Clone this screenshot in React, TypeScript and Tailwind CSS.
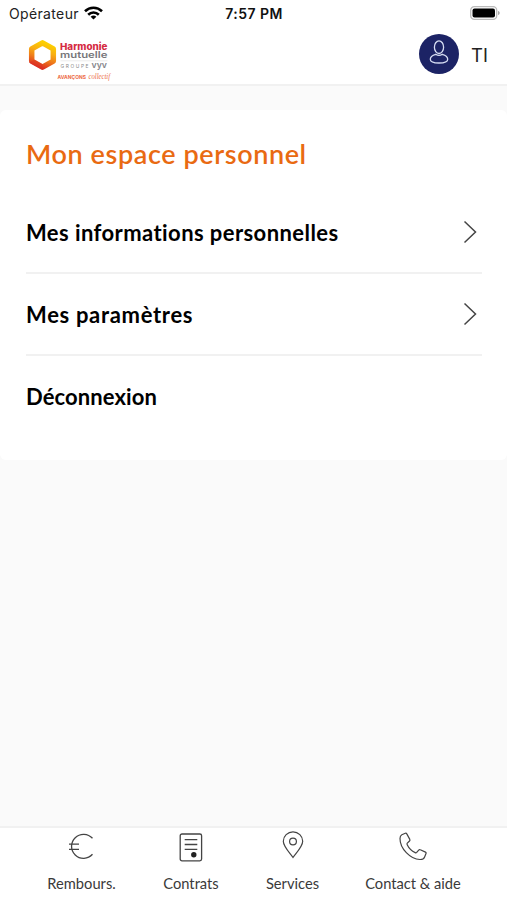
import type { ReactNode } from 'react'

const menu = [
  { label: 'Mes informations personnelles', arrow: true, spacing: 'tracking-[0.420px]' },
  { label: 'Mes paramètres', arrow: true, spacing: 'tracking-[0.680px]' },
  { label: 'Déconnexion', arrow: false, spacing: 'mb-[2px] tracking-[0.100px]' },
]

function StatusBar() {
  return (
    <div className="grid h-7 grid-cols-3 items-center pl-[9px] pr-[7px] font-['Inter'] text-[14px] text-black">
      <div className="flex items-center gap-[5px] pb-[2px]">
        <span className="tracking-[0.350px] text-[#222]">Opérateur</span>
        <svg className="h-[14px] w-[19px]" viewBox="0 0 19 14" fill="none" stroke="#000" strokeWidth="2.6">
          <path d="M1 5.200a12.200 12.200 0 0 1 17 0" />
          <path d="M4.200 8.700a7.600 7.600 0 0 1 10.600 0" />
          <path d="M9.500 13.600 6.600 10.800a4.200 4.200 0 0 1 5.800 0z" fill="#000" stroke="none" />
        </svg>
      </div>
      <span className="pb-[2px] pr-[1px] text-center text-[14px] font-semibold tracking-[0.450px] text-[#111]">7:57 PM</span>
      <svg className="mb-[2px] h-[14px] w-[30px] justify-self-end" viewBox="0 0 30 14">
        <rect x="0.700" y="0.700" width="26" height="12.600" rx="3.600" fill="#fff" stroke="#bbb" strokeWidth="1.300" />
        <rect x="2.500" y="2.400" width="22.500" height="9.200" rx="2" fill="#000" />
        <path d="M28 5v4c1.100-.3 1.700-1 1.700-2S29.100 5.300 28 5z" fill="#aaa" />
      </svg>
    </div>
  )
}

function Logo() {
  return (
    <svg className="h-[46px] w-[86px]" viewBox="0 0 86 46" fontFamily="Inter, sans-serif">
      <defs>
        <linearGradient id="hexagon" x1="0.650" y1="0" x2="0.350" y2="1">
          <stop offset="0" stopColor="#fdd000" />
          <stop offset="0.350" stopColor="#f8ae12" />
          <stop offset="0.650" stopColor="#ef7d1a" />
          <stop offset="1" stopColor="#dc3023" />
        </linearGradient>
      </defs>
      <path d="M14.500 3.800 25.300 9.900v12.200L14.500 28.200 3.700 22.100V9.900z" fill="none" stroke="url(#hexagon)" strokeWidth="5.500" strokeLinejoin="round" />
      <path d="M3.700 22.100 1 23.500 14.500 31v-5.800L6.400 20.600z" fill="#dc3023" fillOpacity=".45" />
      <text x="32" y="10.600" fontSize="9.500" fontWeight="800" fill="#d52b43" textLength="47.500" lengthAdjust="spacingAndGlyphs">Harmonie</text>
      <text x="32" y="18.800" fontSize="9" fontWeight="600" fill="#77777b" textLength="47.500" lengthAdjust="spacingAndGlyphs">mutuelle</text>
      <path d="M32.500 21.800h47" stroke="#ddd" strokeWidth=".6" />
      <text x="32.500" y="28.500" fontSize="4.800" fill="#888" textLength="28" lengthAdjust="spacing">GROUPE</text>
      <text x="63.500" y="28.500" fontSize="9" fontWeight="600" fill="#85858a" textLength="15.500" lengthAdjust="spacingAndGlyphs">vyv</text>
      <text x="29.500" y="40" fontSize="5" fontWeight="700" fill="#ed6a45" textLength="28.500" lengthAdjust="spacingAndGlyphs">AVANÇONS</text>
      <text x="60.500" y="40" fontSize="8" fontStyle="italic" fill="#ed6a45" fontFamily="Liberation Serif, serif" textLength="21.500" lengthAdjust="spacingAndGlyphs">collectif</text>
    </svg>
  )
}

function Header() {
  return (
    <header className="flex h-[58px] items-start justify-between border-b-2 border-[#f1f1f1] pl-7 pr-5">
      <div className="pt-[11px]"><Logo /></div>
      <div className="flex items-center gap-3 pt-[6px]">
        <div className="flex h-10 w-10 items-center justify-center rounded-full bg-[#1c2365]">
          <svg className="mb-[4px] h-[24px] w-[20px]" viewBox="0 0 20 24" fill="none" stroke="#d5dcf2" strokeWidth="1.300">
            <ellipse cx="10" cy="7.200" rx="4.600" ry="6.300" />
            <path d="M6.700 14.300C3.500 15.200 1.300 17 1.300 19.200c0 2.300 3.900 3.800 8.700 3.800s8.700-1.500 8.700-3.800c0-2.200-2.200-4-5.400-4.900-2 1.400-4.600 1.400-6.600 0z" />
          </svg>
        </div>
        <span className="mt-[2px] w-4 font-['Inter'] text-[18.500px] leading-6 text-[#222]">TI</span>
      </div>
    </header>
  )
}

function Tab({ label, className, children }: { label: string; className: string; children: ReactNode }) {
  return (
    <button type="button" className={`flex flex-col items-center ${className}`}>
      <span className="flex h-[43px] items-start pt-1">{children}</span>
      <span className="whitespace-nowrap font-['Lato'] text-[14.700px] leading-6 text-[#3a3a3a]">{label}</span>
    </button>
  )
}

function TabBar() {
  return (
    <nav className="flex h-[74px] border-t-2 border-[#f1f1f1] bg-white pl-[47px]">
      <Tab label="Rembours." className="w-[69px]">
        <svg className="mt-[1px] mr-[2px] h-[27px] w-[26px]" viewBox="0 0 26 27" fill="none" stroke="#444" strokeWidth="1.300">
          <path d="M24.500 5.300A12 12 0 1 0 24.500 21.300M1 11.200h10M1 16.300h10" />
        </svg>
      </Tab>
      <Tab label="Contrats" className="ml-[46px] w-[58px]">
        <svg className="h-[30px] w-[24px]" viewBox="0 0 24 30" fill="none" stroke="#444" strokeWidth="1.300">
          <rect x="1.200" y="2" width="21.400" height="26.800" rx="1.800" />
          <path d="M5.700 7.700h12.600M5.700 12.500h12.600M5.700 17.300h12.600" />
          <circle cx="14.800" cy="22.800" r="2.700" fill="#222" stroke="none" />
        </svg>
      </Tab>
      <Tab label="Services" className="ml-[45px] w-[55px]">
        <svg className="mt-[-1px] h-[28px] w-[22px]" viewBox="0 0 22 28" fill="none" stroke="#444" strokeWidth="1.200">
          <path d="M11 26.500C8.500 22.700 1.300 15.700 1.300 10.300a9.700 9.400 0 0 1 19.400 0C20.700 15.700 13.500 22.700 11 26.500z" />
          <circle cx="11" cy="10.500" r="3.400" />
        </svg>
      </Tab>
      <Tab label="Contact & aide" className="ml-[45px] w-[96px]">
        <svg className="h-[29px] w-[28px]" viewBox="0 0 28 29" fill="none" stroke="#444" strokeWidth="1.200" strokeLinejoin="round">
          <path d="M2.800 2.800 6.300 1.300c.7-.3 1.200 0 1.500.6l3 5.500c.3.600.2 1.100-.3 1.600L8.300 11.200c-.4.400-.4.900-.1 1.500 1.700 3.500 4.600 6.300 8 7.900.6.300 1.100.2 1.500-.2l2-2.300c.5-.5 1-.6 1.600-.3l5.200 2.300c.6.300.8.900.5 1.500l-1.500 3.600c-.7 1.600-2.600 2.400-4.600 2.300C11.300 27.200.9 16.500 1 6.500c0-1.700.5-3 1.800-3.700z" />
        </svg>
      </Tab>
    </nav>
  )
}

export default function App() {
  return (
    <div className="flex h-[900px] w-[507px] flex-col overflow-hidden bg-white">
      <StatusBar />
      <Header />
      <main className="flex-1 bg-[#fafafa] pt-6">
        <section className="h-[350px] rounded-[6px] bg-white px-[26px] pt-[25px]">
          <h1 className="h-[57px] whitespace-nowrap font-['Lato'] text-[27px] font-semibold leading-[38px] tracking-[0.600px] text-[#e96a12]">Mon espace personnel</h1>
          <ul className="w-[456px]">
            {menu.map((item) => (
              <li key={item.label} className="flex h-[82px] items-center justify-between border-b-2 border-[#f1f1f1] pr-[5px] last:border-b-0">
                <span className={`whitespace-nowrap font-['Lato'] text-[22px] font-bold text-black ${item.spacing}`}>{item.label}</span>
                {item.arrow && (
                  <svg className="h-6 w-[14px]" viewBox="0 0 14 24" fill="none" stroke="#444" strokeWidth="1.500">
                    <path d="M1.500 1.500 12.500 12 1.500 22.500" />
                  </svg>
                )}
              </li>
            ))}
          </ul>
        </section>
      </main>
      <TabBar />
    </div>
  )
}
